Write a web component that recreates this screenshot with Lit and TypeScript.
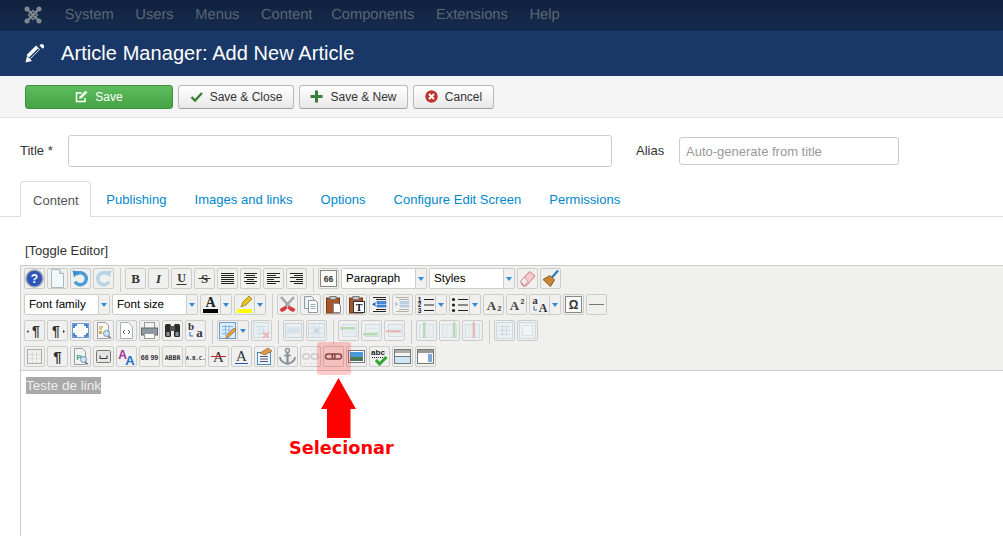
import {html, css, svg, LitElement} from 'lit';
import {customElement} from 'lit/decorators.js';

// toolbar icons, drawn on a 19x19 box
const ICONS: Record<string, any> = {
  help: svg`<circle cx="9.500" cy="9.500" r="8.500" fill="#2f55b8" stroke="#a3abb6" stroke-width="1.600"/><text x="9.500" y="14" font-size="12" font-weight="700" font-family="Liberation Sans" text-anchor="middle" fill="#fff">?</text>`,
  newdoc: svg`<path d="M3.500 .500h8l4 4v14h-12z" fill="#f2f7fa" stroke="#a9bac4"/><path d="M11.500 .500v4h4" fill="#dde7ed" stroke="#a9bac4"/>`,
  undo: svg`<path d="M5 5.500a6 6 0 1 1 -1 7" fill="none" stroke="#4a9cd8" stroke-width="3.400"/><path d="M1.500 1.500l7 1-5.500 6z" fill="#3c8fd0"/>`,
  redo: svg`<path d="M14 5.500a6 6 0 1 0 1 7" fill="none" stroke="#3c93d4" stroke-width="3.400"/><path d="M17.500 1.500l-7 1 5.500 6z" fill="#3c93d4"/>`,
  bold: svg`<text x="9.500" y="14" font-size="13" font-weight="700" font-family="Liberation Serif" text-anchor="middle" fill="#333">B</text>`,
  italic: svg`<text x="9.500" y="14" font-size="13" font-style="italic" font-weight="700" font-family="Liberation Serif" text-anchor="middle" fill="#333">I</text>`,
  underline: svg`<text x="9.500" y="13" font-size="12" font-weight="700" font-family="Liberation Serif" text-anchor="middle" fill="#333">U</text><path d="M4.500 15.500h10" stroke="#333"/>`,
  strike: svg`<text x="9.500" y="14" font-size="13" font-weight="700" font-family="Liberation Serif" text-anchor="middle" fill="#333">S</text><path d="M3.500 9.500h12" stroke="#333"/>`,
  alignFull: lines([[3, 16], [3, 16], [3, 16], [3, 16], [3, 16], [3, 16]]),
  alignCenter: lines([[3, 16], [5, 14], [3, 16], [6, 13], [3, 16], [5, 14]]),
  alignLeft: lines([[3, 16], [3, 12], [3, 16], [3, 10], [3, 16], [3, 12]]),
  alignRight: lines([[3, 16], [7, 16], [3, 16], [9, 16], [3, 16], [7, 16]]),
  quote: svg`<rect x="1.500" y="1.500" width="16" height="16" fill="#fbfbfb" stroke="#888"/><text x="9.500" y="12.500" font-size="8.500" font-weight="700" font-family="Liberation Sans" text-anchor="middle" fill="#333">66</text>`,
  eraser: svg`<path d="M2.500 12.500l9-10 5.500 4.500-9 10h-3z" fill="#f9c9cf" stroke="#c77"/><path d="M2.500 12.500l4 4 3.500-4-3.500-4.500z" fill="#fbeaea" stroke="#c99"/>`,
  broom: svg`<path d="M17 1.500l-6 7" stroke="#2f7bbd" stroke-width="2.200"/><path d="M9 6.500l4.500 4.500-4 6.500-7.500-7z" fill="#c9853a" stroke="#8a5a22"/>`,
  cut: svg`<path d="M3 2l9 10M16 2l-9 10" stroke="#a4a8ac" stroke-width="2.600"/><path d="M8 11l-4 1.500-2.500 2 2 2.500 3-1 3-3M11 11l4 1.500 2.500 2-2 2.500-3-1-3-3" fill="#d93a3a"/>`,
  copy: svg`<path d="M3.500 1.500h7l2 2v10h-9z" fill="#eef3f6" stroke="#8b989f"/><path d="M7.500 5.500h7l2 2v10h-9z" fill="#fbfcfd" stroke="#8b989f"/><path d="M9.500 9.500h5M9.500 11.500h5M9.500 13.500h5" stroke="#9ab"/>`,
  paste: svg`<rect x="2.500" y="3" width="13" height="15" fill="#a7562a" stroke="#6e3a1c"/><rect x="6" y="1.500" width="6" height="3" fill="#ccc" stroke="#777"/><path d="M9.500 8.500h5l2 2v7h-7z" fill="#fff" stroke="#889"/>`,
  pasteText: svg`<rect x="2.500" y="3" width="13" height="15" fill="#a7562a" stroke="#6e3a1c"/><rect x="6" y="1.500" width="6" height="3" fill="#ccc" stroke="#777"/><rect x="6.500" y="6.500" width="11" height="11" fill="#fff" stroke="#333"/><text x="12" y="15.500" font-size="10" font-weight="700" font-family="Liberation Serif" text-anchor="middle" fill="#111">T</text>`,
  outdent: svg`<path d="M3 2.500h13M3 16.500h13M6 4.500h10M6 14.500h10" stroke="#222"/><path d="M7 6.500h9v2h-9zM7 10h9v2h-9z" fill="#4b93e0" stroke="#1f67c4" stroke-width=".7"/><path d="M2 9.300l3.500-2.300v4.600z" fill="#1f67c4"/>`,
  indent: svg`<path d="M3 2.500h13M3 16.500h13M6 4.500h10M6 14.500h10" stroke="#222"/><path d="M7 6.500h9v2h-9zM7 10h9v2h-9z" fill="#4b93e0" stroke="#1f67c4" stroke-width=".7"/><path d="M5.500 9.300l-3.500-2.300v4.600z" fill="#1f67c4"/>`,
  olist: svg`<text x="3.500" y="6.500" font-size="6.500" font-weight="700" font-family="Liberation Sans" text-anchor="middle" fill="#222">1</text><text x="3.500" y="12" font-size="6.500" font-weight="700" font-family="Liberation Sans" text-anchor="middle" fill="#222">2</text><text x="3.500" y="17.500" font-size="6.500" font-weight="700" font-family="Liberation Sans" text-anchor="middle" fill="#222">3</text><path d="M8 4.500h10M8 10h10M8 15.500h10" stroke="#222"/>`,
  ulist: svg`<circle cx="3.500" cy="4.500" r="1.600" fill="#222"/><circle cx="3.500" cy="10" r="1.600" fill="#222"/><circle cx="3.500" cy="15.500" r="1.600" fill="#222"/><path d="M8 4.500h10M8 10h10M8 15.500h10" stroke="#222"/>`,
  sub: svg`<text x="7.500" y="14.500" font-size="13" font-weight="700" font-family="Liberation Serif" text-anchor="middle" fill="#444">A</text><text x="15.500" y="15.500" font-size="7" font-weight="700" font-family="Liberation Sans" text-anchor="middle" fill="#444">2</text>`,
  sup: svg`<text x="7.500" y="14.500" font-size="13" font-weight="700" font-family="Liberation Serif" text-anchor="middle" fill="#444">A</text><text x="15.500" y="9" font-size="7" font-weight="700" font-family="Liberation Sans" text-anchor="middle" fill="#444">2</text>`,
  charcase: svg`<text x="5" y="9" font-size="11" font-weight="700" font-family="Liberation Serif" text-anchor="middle" fill="#334">a</text><text x="13" y="17" font-size="12" font-weight="700" font-family="Liberation Serif" text-anchor="middle" fill="#334">A</text><path d="M4 11v4h3" fill="none" stroke="#2b6fc2"/>`,
  omega: svg`<rect x="1.500" y="1.500" width="16" height="16" fill="#fbfbfb" stroke="#888"/><text x="9.500" y="14" font-size="12" font-weight="700" font-family="Liberation Sans" text-anchor="middle" fill="#333">Ω</text>`,
  hr: svg`<path d="M2 9.500h15" stroke="#777"/>`,
  ltr: svg`<text x="11" y="14.500" font-size="14" font-weight="700" font-family="Liberation Sans" text-anchor="middle" fill="#333">¶</text><path d="M1.500 10.500l2-1.500v3z" fill="#333"/>`,
  rtl: svg`<text x="8" y="14.500" font-size="14" font-weight="700" font-family="Liberation Sans" text-anchor="middle" fill="#333">¶</text><path d="M17 10.500l-2-1.500v3z" fill="#333"/>`,
  fullscreen: svg`<rect x="1.500" y="2.500" width="16" height="14" fill="#fbfcfe" stroke="#6d9ed8"/><path d="M3 7v-3h3M13 4h3v3M16 12v3h-3M6 15h-3v-3" fill="none" stroke="#1b62c4" stroke-width="1.500"/>`,
  preview: svg`<path d="M3.500 1.500h8l3 3v13h-11z" fill="#f7f7f2" stroke="#99a"/><path d="M5 6h4M5 8h3" stroke="#c8912e"/><rect x="5" y="10" width="3" height="3" fill="#d8a23a"/><circle cx="12.500" cy="12.500" r="3" fill="#cfe4f5" stroke="#6b8fb0"/><path d="M14.500 15l2.500 2.500" stroke="#777" stroke-width="1.500"/>`,
  code: svg`<path d="M3.500 1.500h8l4 4v12h-12z" fill="#fafcfd" stroke="#a3b2bb"/><path d="M8 9l-2 2 2 2M11 9l2 2-2 2" fill="none" stroke="#555"/>`,
  print: svg`<rect x="4.500" y="1.500" width="10" height="6" fill="#f2f2f2" stroke="#999"/><rect x="1.500" y="7" width="16" height="7" fill="#8f99a3" stroke="#666"/><rect x="4.500" y="12.500" width="10" height="5" fill="#fff" stroke="#999"/>`,
  find: svg`<rect x="2" y="3" width="6" height="13" rx="1.500" fill="#2b2b2b"/><rect x="11" y="3" width="6" height="13" rx="1.500" fill="#2b2b2b"/><rect x="7" y="5" width="5" height="5" fill="#555"/><rect x="3.500" y="11" width="3" height="4" fill="#8895a5"/><rect x="12.500" y="11" width="3" height="4" fill="#8895a5"/>`,
  replace: svg`<text x="5" y="9" font-size="11" font-weight="700" font-family="Liberation Serif" text-anchor="middle" fill="#334">b</text><text x="13.500" y="16" font-size="13" font-weight="700" font-family="Liberation Serif" text-anchor="middle" fill="#334">a</text><path d="M4 11v4h3" fill="none" stroke="#2b6fc2"/>`,
  table: svg`<rect x="1.500" y="1.500" width="16" height="16" fill="#dcebf8" stroke="#6f9cc8"/><path d="M4 5.500h11M4 9h11M4 12.500h11M7.500 4v11M11 4v11" stroke="#8db6dc"/><path d="M8 17l1-3 7-7 2 2-7 7z" fill="#e8a23a" stroke="#8a5a22" stroke-width=".6"/>`,
  tableDel: svg`<rect x="1.500" y="1.500" width="15" height="15" fill="#dcebf8" stroke="#7fa6cc"/><path d="M4 5.500h10M4 9h10M4 12.500h10M7.500 4v10M11 4v10" stroke="#8db6dc"/><path d="M11 11l6 6M17 11l-6 6" stroke="#d8403a" stroke-width="2"/>`,
  rowProps: svg`<rect x="1.500" y="2.500" width="16" height="14" fill="#dcebf8" stroke="#6f9cc8"/><path d="M3 7h13M3 12h13" stroke="#8db6dc"/><rect x="3" y="7.500" width="13" height="4" fill="#9cc4ea"/>`,
  cellProps: svg`<rect x="1.500" y="2.500" width="16" height="14" fill="#dcebf8" stroke="#6f9cc8"/><path d="M3 7h13M3 12h13M7 3v13M12 3v13" stroke="#8db6dc"/><rect x="7.500" y="7.500" width="4" height="4" fill="#6f9ed0"/>`,
  rowBefore: rowIcon('#37a72e', 6),
  rowAfter: rowIcon('#37a72e', 12),
  rowDel: rowIcon('#d8403a', 9),
  colBefore: colIcon('#37a72e', 6),
  colAfter: colIcon('#37a72e', 13),
  colDel: colIcon('#d8403a', 9.500),
  grid: svg`<rect x="1.500" y="1.500" width="16" height="16" fill="#e6f0fa" stroke="#7ea7d0"/><path d="M4 5.500h11M4 9.500h11M4 13.500h11M7.500 4v11M11.500 4v11" stroke="#7ea7d0"/>`,
  gridBox: svg`<rect x="1.500" y="1.500" width="16" height="16" fill="#e6f0fa" stroke="#7ea7d0"/><rect x="4.500" y="4.500" width="10" height="10" fill="#f7fbff" stroke="#a6c4e0"/>`,
  visual: svg`<path d="M2.500 2.500h14v14h-14z" fill="none" stroke="#666" stroke-dasharray="1 1"/><path d="M2.500 7.500h14M2.500 11.500h14M7.500 2.500v14M11.500 2.500v14" fill="none" stroke="#bbb" stroke-dasharray="1 2"/>`,
  pilcrow: svg`<text x="9.500" y="15" font-size="15" font-weight="700" font-family="Liberation Sans" text-anchor="middle" fill="#333">¶</text>`,
  template: svg`<path d="M3.500 1.500h8l3 3v13h-11z" fill="#eef6f0" stroke="#99a"/><text x="8" y="13" font-size="8" font-weight="700" font-family="Liberation Sans" text-anchor="middle" fill="#3fa08a">P</text><circle cx="12.500" cy="12.500" r="3" fill="#cfe4f5" stroke="#6b8fb0"/><path d="M14.500 15l2.500 2.500" stroke="#777" stroke-width="1.500"/>`,
  nonbreak: svg`<rect x="2.500" y="3.500" width="14" height="12" rx="1" fill="#e4e4e4" stroke="#777"/><path d="M6 8.500v3h7v-3" fill="none" stroke="#333"/>`,
  styleprops: svg`<text x="5.500" y="12" font-size="12" font-weight="700" font-family="Liberation Sans" text-anchor="middle" fill="#a0309a">A</text><text x="13" y="17.500" font-size="13" font-weight="700" font-family="Liberation Sans" text-anchor="middle" fill="#1c74c4">A</text>`,
  cite: svg`<text x="9.500" y="12.500" font-size="7" font-weight="700" font-family="Liberation Sans" text-anchor="middle" fill="#333">66 99</text>`,
  abbr: svg`<text x="9.500" y="12.500" font-size="6.500" font-weight="700" font-family="DejaVu Sans Mono" text-anchor="middle" fill="#333">ABBR</text>`,
  acronym: svg`<text x="9.500" y="12.500" font-size="5.400" font-weight="700" font-family="DejaVu Sans Mono" text-anchor="middle" fill="#333">A.B.C.</text>`,
  del: svg`<text x="9.500" y="15" font-size="15" font-family="Liberation Serif" text-anchor="middle" fill="#333">A</text><path d="M2 9.500h15" stroke="#c22"/>`,
  ins: svg`<text x="9.500" y="14" font-size="15" font-family="Liberation Serif" text-anchor="middle" fill="#333">A</text><path d="M3 16.500h13" stroke="#2b4fc2"/>`,
  attribs: svg`<rect x="2.500" y="5.500" width="13" height="12" fill="#eef6fc" stroke="#4d89c2"/><path d="M5 9.500h8M5 12h8M5 14.500h8" stroke="#557"/><path d="M5 6l8-5 4 3-7 4z" fill="#d89a4a" stroke="#8a5a22" stroke-width=".6"/>`,
  anchor: svg`<circle cx="9.500" cy="3.500" r="2" fill="none" stroke="#8b959d" stroke-width="1.400"/><path d="M9.500 5.500v11" stroke="#8b959d" stroke-width="2.400"/><path d="M6 8.500h7" stroke="#8b959d" stroke-width="1.600"/><path d="M2 10c0 4 4 6 7.500 7 3.500-1 7.500-3 7.500-7" fill="none" stroke="#8b959d" stroke-width="2"/>`,
  unlink: svg`<rect x="2" y="7" width="6.500" height="5" rx="2" fill="none" stroke="#777" stroke-width="1.500"/><rect x="10.500" y="7" width="6.500" height="5" rx="2" fill="none" stroke="#777" stroke-width="1.500"/><path d="M9.500 1v3M9.500 15v3M3 2l2 2M16 2l-2 2M3 17l2-2M16 17l-2-2" stroke="#999"/>`,
  link: svg`<rect x="1.500" y="7" width="9.500" height="5" rx="2.500" fill="none" stroke="#6b5a55" stroke-width="1.500"/><rect x="8" y="7" width="9.500" height="5" rx="2.500" fill="none" stroke="#6b5a55" stroke-width="1.500"/>`,
  image: svg`<rect x="1.500" y="3.500" width="16" height="12" fill="#fff" stroke="#778"/><rect x="3" y="5" width="13" height="5" fill="#4b9ad8"/><rect x="3" y="10" width="13" height="4" fill="#4c7a52"/>`,
  spell: svg`<text x="8" y="8" font-size="8" font-weight="700" font-family="Liberation Sans" text-anchor="middle" fill="#222">abc</text><path d="M2 10.500h13" stroke="#222" stroke-dasharray="1 1"/><path d="M6 13l3.500 4 7-7" fill="none" stroke="#2fa82f" stroke-width="3"/>`,
  layer: svg`<rect x="1.500" y="2.500" width="16" height="14" fill="#f4f4f4" stroke="#777"/><rect x="2" y="3" width="15" height="3" fill="#aaa"/><rect x="2" y="10" width="15" height="6" fill="#cfe6f5"/><path d="M2 9.500h15" stroke="#777"/>`,
  template2: svg`<rect x="1.500" y="2.500" width="16" height="14" fill="#f4f4f4" stroke="#777"/><rect x="2" y="3" width="15" height="3" fill="#999"/><rect x="12" y="7" width="4" height="8" fill="#7fa9d4"/><rect x="3" y="7" width="8" height="8" fill="#fff"/>`,
};

function lines(rows: number[][]) {
  return svg`${rows.map((r, i) => svg`<path d="M${r[0]} ${4.5 + i * 2}H${r[1]}" stroke="#222"/>`)}`;
}

function rowIcon(color: string, y: number) {
  return svg`<rect x="3.500" y="3.500" width="14" height="12" fill="#dcebf8" stroke="#8db6dc"/><path d="M5 7.500h11M5 11.500h11" stroke="#b3d0ea"/><rect x="1" y="${y}" width="15" height="2.500" fill="${color}"/>`;
}

function colIcon(color: string, x: number) {
  return svg`<rect x="2.500" y="3.500" width="14" height="13" fill="#dcebf8" stroke="#8db6dc"/><path d="M7 5v10M12 5v10" stroke="#b3d0ea"/><rect x="${x}" y="1" width="2.500" height="16" fill="${color}"/>`;
}

type Item =
  | string
  | {sep: true}
  | {select: string; w: number}
  | {split: string; bar?: string};

const SEP = {sep: true} as const;
const OFF = new Set(['redo', 'indent', 'tableDel', 'rowProps', 'cellProps', 'rowBefore', 'rowAfter', 'rowDel', 'colBefore', 'colAfter', 'colDel', 'grid', 'gridBox', 'unlink']);

const ROWS: Item[][] = [
  ['help', 'newdoc', 'undo', 'redo', SEP, 'bold', 'italic', 'underline', 'strike', 'alignFull', 'alignCenter', 'alignLeft', 'alignRight', SEP, 'quote',
    {select: 'Paragraph', w: 86}, {select: 'Styles', w: 86}, 'eraser', 'broom'],
  [{select: 'Font family', w: 86}, {select: 'Font size', w: 86}, {split: 'colorA', bar: '#000'}, {split: 'colorH', bar: '#ff0'}, SEP,
    'cut', 'copy', 'paste', 'pasteText', 'outdent', 'indent', {split: 'olist'}, {split: 'ulist'}, 'sub', 'sup', {split: 'charcase'}, 'omega', 'hr'],
  ['ltr', 'rtl', 'fullscreen', 'preview', 'code', 'print', 'find', 'replace', SEP, {split: 'table'}, 'tableDel', SEP, 'rowProps', 'cellProps', SEP,
    'rowBefore', 'rowAfter', 'rowDel', SEP, 'colBefore', 'colAfter', 'colDel', SEP, 'grid', 'gridBox'],
  ['visual', 'pilcrow', 'template', 'nonbreak', 'styleprops', 'cite', 'abbr', 'acronym', 'del', 'ins', 'attribs', 'anchor', 'unlink', 'link', 'image', 'spell', 'layer', 'template2'],
];

const NAV = ['System', 'Users', 'Menus', 'Content', 'Components', 'Extensions', 'Help'];
const TABS = ['Content', 'Publishing', 'Images and links', 'Options', 'Configure Edit Screen', 'Permissions'];

@customElement('app-root')
export class AppRoot extends LitElement {
  static styles = css`
    :host {
      display: block;
      height: 536px;
      overflow: hidden;
      position: relative;
      background: #fff;
      font-family: "Liberation Sans", Arial, sans-serif;
      font-size: 13px;
      color: #333;
    }
    .nav {
      height: 29px;
      background: linear-gradient(#11213f, #152b4d);
      border-bottom: 1px solid #0e1f3a;
      display: flex;
      align-items: center;
    }
    .logo {
      width: 18px;
      height: 18px;
      margin-left: 24px;
      margin-right: 12px;
    }
    .nav span {
      color: #5c6675;
      font-size: 14.700px;
      text-rendering: geometricPrecision;
      margin: 0 10.800px;
    }
    .nav span:nth-of-type(4) { margin-right: 7.900px; }
    .head {
      height: 46px;
      background: #1a3867;
      display: flex;
      align-items: center;
      color: #fff;
      font-size: 20px;
      letter-spacing: .065px;
      padding-left: 25px;
      gap: 16px;
    }
    .sub {
      height: 41px;
      background: #f5f5f5;
      border-bottom: 1px solid #e3e3e3;
      display: flex;
      align-items: center;
      gap: 5px;
      padding-left: 25px;
    }
    .btn {
      height: 24px;
      box-sizing: border-box;
      border: 1px solid #bbb;
      border-bottom-color: #a2a2a2;
      border-radius: 3px;
      background: linear-gradient(#fff, #e8e8e8);
      display: flex;
      align-items: center;
      justify-content: center;
      gap: 7px;
      font-size: 12px;
      color: #333;
    }
    .btn.save {
      width: 148px;
      background: linear-gradient(#5ebd5e, #46a346);
      border-color: #3f8f3f;
      color: #fff;
    }
    .close { width: 116px; }
    .new { width: 109px; }
    .cancel { width: 81px; }
    .fields {
      display: flex;
      align-items: center;
      padding: 17px 0 0 20px;
      height: 32px;
    }
    .fields label { width: 48px; margin-top: -2px; }
    .field {
      box-sizing: border-box;
      border: 1px solid #ccc;
      border-radius: 3px;
      background: #fff;
    }
    .title { width: 544px; height: 32px; }
    .alias-label { margin-left: 24px; width: 43px !important; }
    .alias {
      width: 220px;
      height: 28px;
      color: #999;
      padding: 6px;
      line-height: 16px;
    }
    .tabs {
      display: flex;
      margin-top: 14px;
      padding-left: 20px;
      height: 35px;
      border-bottom: 1px solid #ddd;
      gap: 2px;
    }
    .tab {
      padding: 0 13px;
      line-height: 38px;
      letter-spacing: .025px;
      color: #0088cc;
      height: 36px;
      box-sizing: border-box;
    }
    .tab.on {
      padding: 0 11.600px 0 12px;
      color: #555;
      background: #fff;
      border: 1px solid #ddd;
      border-bottom: 0;
      border-radius: 4px 4px 0 0;
    }
    .toggle {
      margin: 26px 0 0 25px;
      line-height: 16px;
      height: 16px;
    }
    .editor {
      margin: 6px 0 0 20px;
      border-left: 1px solid #ccc;
    }
    .toolbar {
      background: #f0f0ee;
      border-top: 1px solid #ccc;
      border-bottom: 1px solid #ccc;
      padding: 2px 0 0 3px;
      display: flex;
      flex-direction: column;
      gap: 5px;
      height: 106px;
      box-sizing: border-box;
    }
    .row {
      display: flex;
      gap: 2px;
      height: 21px;
    }
    .b {
      width: 21px;
      height: 21px;
      box-sizing: border-box;
      border: 1px solid #ccc;
      border-radius: 2px;
      display: flex;
      align-items: center;
      justify-content: center;
      flex: none;
    }
    .b svg { width: 19px; height: 19px; display: block; }
    .b.off svg { opacity: .3; }
    .sep {
      width: 1px;
      height: 24px;
      margin: 0 2px 0 4px;
      background: #ccc;
      flex: none;
    }
    .split {
      display: flex;
      flex: none;
    }
    .arrow {
      width: 11px;
      height: 21px;
      box-sizing: border-box;
      border: 1px solid #ccc;
      border-left: 0;
      border-radius: 0 2px 2px 0;
      display: flex;
      align-items: center;
      justify-content: center;
    }
    .arrow i {
      width: 0;
      height: 0;
      border: 3.500px solid transparent;
      border-top: 4px solid #2f8bd8;
      border-bottom: 0;
    }
    .select {
      height: 21px;
      flex: none;
      display: flex;
    }
    .select .val {
      flex: 1;
      background: #fff;
      border: 1px solid #ccc;
      border-radius: 2px 0 0 2px;
      box-sizing: border-box;
      padding-left: 4px;
      font-size: 11.600px;
      text-rendering: geometricPrecision;
      line-height: 19px;
      color: #000;
      white-space: nowrap;
    }
    .sw {
      position: relative;
      font-family: "Liberation Serif", serif;
      font-weight: 700;
      font-size: 14px;
      line-height: 15px;
      color: #222;
      text-align: center;
    }
    .sw u {
      position: absolute;
      left: 2px;
      right: 2px;
      bottom: 1px;
      height: 4px;
    }
    .swb {
      width: 21px;
      height: 21px;
      box-sizing: border-box;
      border: 1px solid #ccc;
      border-radius: 2px 0 0 2px;
      flex: none;
    }
    .pen {
      position: absolute;
      left: 4px;
      top: 0;
      width: 14px;
      height: 14px;
    }
    .body {
      padding: 6px 0 0 5px;
      height: 200px;
      font-size: 13.500px;
      line-height: 17px;
    }
    .body span {
      background: #a9a9a9;
      color: #eee;
      display: inline-block;
    }
    .mark {
      position: absolute;
      left: 317px;
      top: 342px;
      width: 34px;
      height: 33px;
      border-radius: 3px;
      background: rgba(255, 0, 0, .2);
    }
    .up {
      position: absolute;
      left: 321px;
      top: 378px;
      width: 36px;
      height: 60px;
    }
    .note {
      position: absolute;
      left: 289px;
      top: 438px;
      color: #f00;
      font: 700 17.700px "DejaVu Sans", sans-serif;
      line-height: 21px;
    }
  `;

  renderItem(it: Item) {
    if (typeof it === 'string') {
      return html`<div class="b ${OFF.has(it) ? 'off' : ''}"><svg viewBox="0 0 19 19">${ICONS[it]}</svg></div>`;
    }
    if ('sep' in it) return html`<div class="sep"></div>`;
    if ('select' in it) {
      return html`<div class="select" style="width:${it.w}px"><div class="val">${it.select}</div><div class="arrow"><i></i></div></div>`;
    }
    if (it.bar) {
      return html`<div class="split"><div class="swb sw">${it.split === 'colorA'
        ? 'A'
        : html`<svg class="pen" viewBox="0 0 14 14"><path d="M2 12l2-5 6-6 3 3-6 6z" fill="#e8c020" stroke="#8a7a10" stroke-width=".7"/></svg>`}<u style="background:${it.bar}"></u></div><div class="arrow"><i></i></div></div>`;
    }
    return html`<div class="split"><div class="b" style="border-radius:2px 0 0 2px"><svg viewBox="0 0 19 19">${ICONS[it.split]}</svg></div><div class="arrow"><i></i></div></div>`;
  }

  render() {
    return html`
      <div class="nav">
        <svg class="logo" viewBox="0 0 18 18" fill="none" stroke="#7f8790">
          <path d="M3 3l12 12M15 3l-12 12" stroke-width="2.400"/>
          <path d="M9 4.500l4.500 4.500-4.500 4.500-4.500-4.500z" stroke-width="1.400"/>
          <g fill="#7f8790" stroke="none"><circle cx="3" cy="3" r="2.500"/><circle cx="15" cy="3" r="2.500"/><circle cx="3" cy="15" r="2.500"/><circle cx="15" cy="15" r="2.500"/></g>
        </svg>
        ${NAV.map((n) => html`<span>${n}</span>`)}
      </div>
      <div class="head">
        <svg width="20" height="20" viewBox="0 0 20 20">
          <path d="M3.500 14L13 4.500" stroke="#fff" stroke-width="5.500"/>
          <path d="M4.500 15L13.500 6" stroke="#1a3867" stroke-width="1.600"/>
          <path d="M.500 19.500l1.500-6.500 5 5z" fill="#fff"/>
          <path d="M14.500 2.500l1-1a2.300 2.300 0 0 1 3.200 3.200l-1 1z" fill="#fff"/>
        </svg>
        <span>Article Manager: Add New Article</span>
      </div>
      <div class="sub">
        <div class="btn save">
          <svg width="13" height="13" viewBox="0 0 13 13" fill="none" stroke="#fff" stroke-width="1.500"><path d="M10 8v3.500h-8.500v-8.500h5"/><path d="M4.500 8.500l.5-2 5.500-5.500 1.500 1.500-5.500 5.500z" fill="#fff" stroke-width=".6"/></svg>
          Save
        </div>
        <div class="btn close">
          <svg width="13" height="13" viewBox="0 0 13 13"><path d="M1.500 7l3.500 3.500 7-7.500" fill="none" stroke="#378137" stroke-width="2.400"/></svg>
          Save &amp; Close
        </div>
        <div class="btn new">
          <svg width="13" height="13" viewBox="0 0 13 13"><path d="M5 .500h3v4.500h4.500v3h-4.500v4.500h-3v-4.500h-4.500v-3h4.500z" fill="#378137"/></svg>
          Save &amp; New
        </div>
        <div class="btn cancel">
          <svg width="13" height="13" viewBox="0 0 13 13"><circle cx="6.500" cy="6.500" r="6.200" fill="#bd362f"/><path d="M4 4l5 5M9 4l-5 5" stroke="#fff" stroke-width="2"/></svg>
          Cancel
        </div>
      </div>
      <div class="fields">
        <label>Title *</label>
        <div class="field title"></div>
        <label class="alias-label">Alias</label>
        <div class="field alias">Auto-generate from title</div>
      </div>
      <div class="tabs">
        ${TABS.map((t, i) => html`<div class="tab ${i === 0 ? 'on' : ''}">${t}</div>`)}
      </div>
      <div class="toggle">[Toggle Editor]</div>
      <div class="editor">
        <div class="toolbar">
          ${ROWS.map((r) => html`<div class="row">${r.map((it) => this.renderItem(it))}</div>`)}
        </div>
        <div class="body"><span>Teste de link</span></div>
      </div>
      <div class="mark"></div>
      <svg class="up" viewBox="0 0 36 60"><path d="M17.500 0L35 31H29.500V60H6V31H0z" fill="#f00"/></svg>
      <div class="note">Selecionar</div>
    `;
  }
}
